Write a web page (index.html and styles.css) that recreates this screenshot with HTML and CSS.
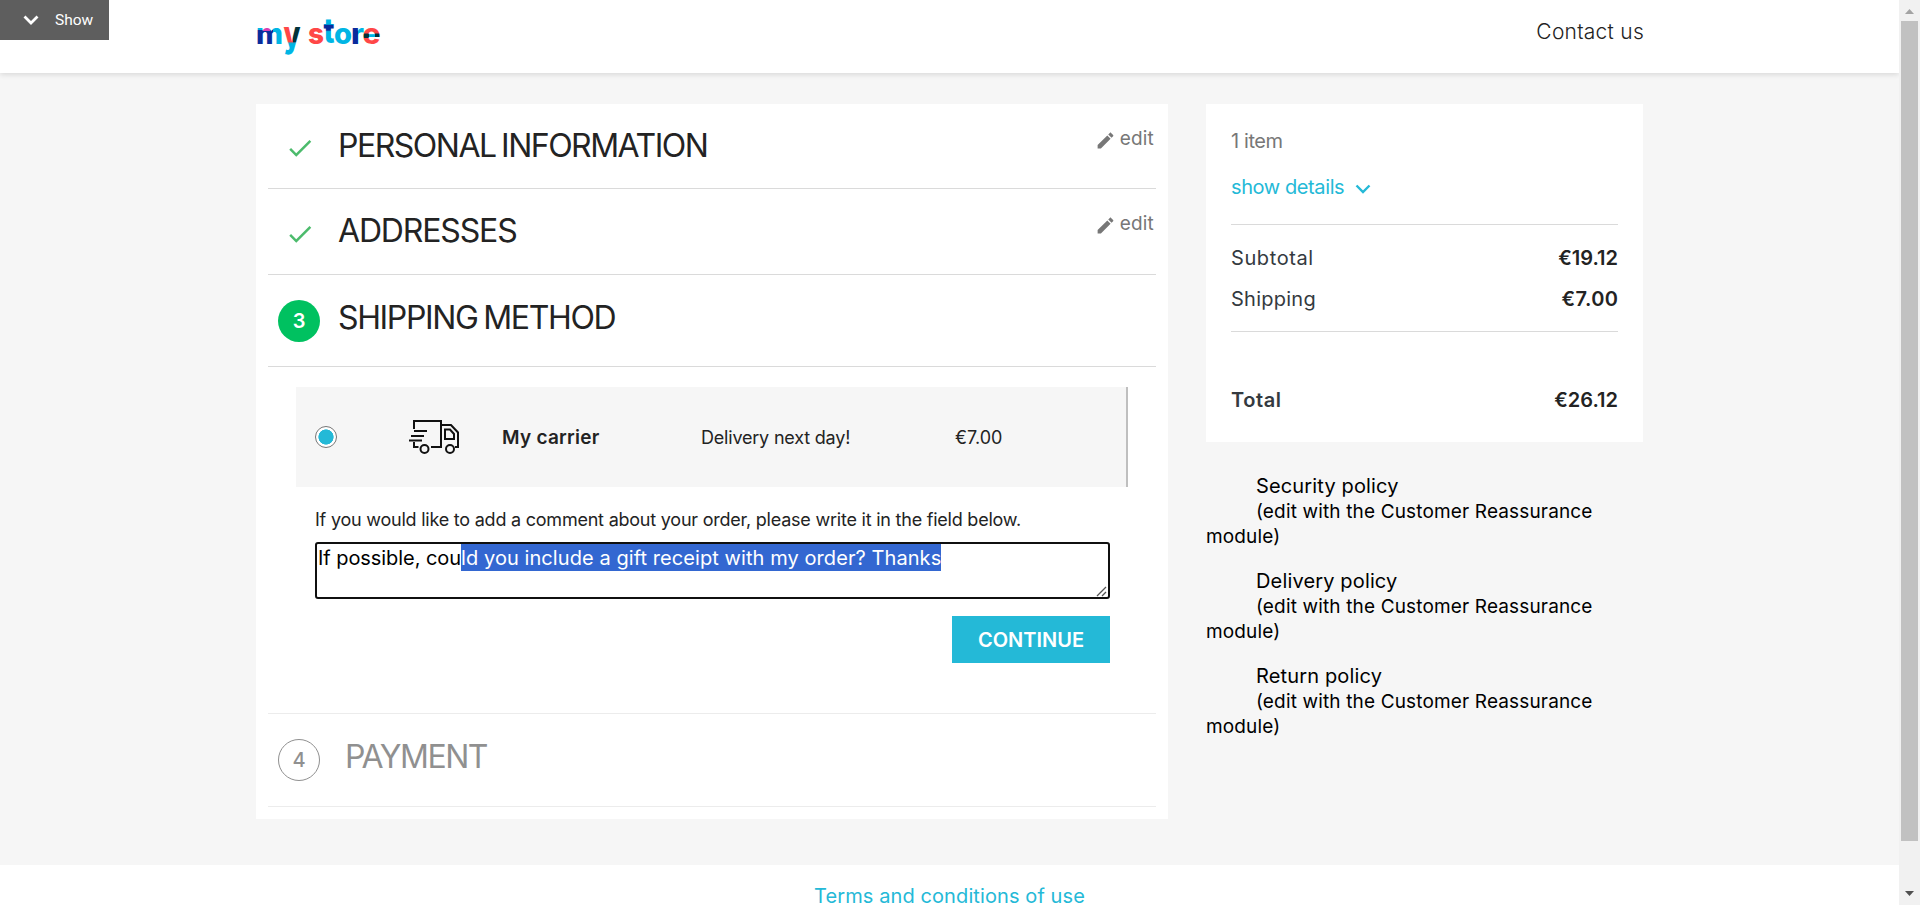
FILE: index.html
```html
<!DOCTYPE html>
<html lang="en">
<head>
<meta charset="utf-8">
<title>My store - Checkout</title>
<link rel="stylesheet" href="styles.css">
</head>
<body>
<div class="page">
  <header class="header">
    <div class="container header-row">
      <svg class="logo" width="126" height="44" viewBox="0 0 126 44" aria-label="my store">
        <defs>
          <pattern id="fill-m" patternUnits="userSpaceOnUse" width="126" height="44"><rect width="126" height="44" fill="#00b5e4"/><rect x="1" y="15" width="16" height="29" fill="#0a2b9c"/><rect x="7" y="8" width="7" height="8" fill="#d63fb4"/></pattern>
          <pattern id="fill-y" patternUnits="userSpaceOnUse" width="126" height="44"><rect width="126" height="44" fill="#ff4747"/><rect x="37" width="10" height="25" fill="#02323a"/><rect y="25" width="126" height="19" fill="#00b5e4"/></pattern>
          <pattern id="fill-t" patternUnits="userSpaceOnUse" width="126" height="44"><rect width="126" height="44" fill="#00b5e4"/><rect y="13" width="126" height="5" fill="#0a2b9c"/></pattern>
          <pattern id="fill-r" patternUnits="userSpaceOnUse" width="126" height="44"><rect width="126" height="44" fill="#0a2b9c"/><rect x="102" width="24" height="44" fill="#00b5e4"/></pattern>
          <pattern id="fill-e" patternUnits="userSpaceOnUse" width="126" height="44"><rect width="126" height="44" fill="#ff4747"/><rect x="106" y="18.500" width="20" height="4.500" fill="#02323a"/><rect x="113" y="18.500" width="6" height="4.500" fill="#00b5e4"/></pattern>
        </defs>
        <g class="logo-text">
          <text x="0" y="28.500" textLength="27" lengthAdjust="spacingAndGlyphs" fill="url(#fill-m)">m</text>
          <text transform="translate(0 -3.200) scale(1 1.230)" x="27.500" y="28.500" textLength="17" lengthAdjust="spacingAndGlyphs" fill="url(#fill-y)">y</text>
          <text x="52" y="28.500" textLength="16" lengthAdjust="spacingAndGlyphs" fill="#ff4747">s</text>
          <text transform="translate(0 -6) scale(1 1.210)" x="67.500" y="28.500" textLength="11" lengthAdjust="spacingAndGlyphs" fill="url(#fill-t)">t</text>
          <text x="78" y="28.500" textLength="18" lengthAdjust="spacingAndGlyphs" fill="#00b5e4">o</text>
          <text x="95" y="28.500" textLength="13" lengthAdjust="spacingAndGlyphs" fill="url(#fill-r)">r</text>
          <text x="106.500" y="28.500" textLength="18" lengthAdjust="spacingAndGlyphs" fill="url(#fill-e)">e</text>
        </g>
      </svg>
      <a class="contact">Contact us</a>
    </div>
    <div class="show-tab">
      <svg width="16" height="11" viewBox="0 0 16 11"><path d="M1.500 1.500 8 8l6.500-6.500" fill="none" stroke="#fff" stroke-width="2.800"/></svg>
      <span>Show</span>
    </div>
  </header>

  <main class="container content">
    <section class="checkout">
      <div class="step">
        <span class="marker"><svg class="check" width="30" height="30" viewBox="0 0 24 24"><path d="M9 16.170 4.830 12l-1.420 1.410L9 19 21 7l-1.410-1.410z"/></svg></span>
        <h1 class="title personal">PERSONAL INFORMATION</h1>
        <a class="edit"><svg width="21" height="21" viewBox="0 0 24 24"><path d="M3 17.250V21h3.750L17.810 9.940l-3.750-3.750zM20.710 7.040c.39-.39.39-1.020 0-1.410l-2.340-2.340c-.39-.39-1.020-.39-1.410 0l-1.830 1.830 3.750 3.750z"/></svg><span>edit</span></a>
      </div>
      <div class="step second">
        <span class="marker"><svg class="check" width="30" height="30" viewBox="0 0 24 24"><path d="M9 16.170 4.830 12l-1.420 1.410L9 19 21 7l-1.410-1.410z"/></svg></span>
        <h1 class="title addresses">ADDRESSES</h1>
        <a class="edit"><svg width="21" height="21" viewBox="0 0 24 24"><path d="M3 17.250V21h3.750L17.810 9.940l-3.750-3.750zM20.710 7.040c.39-.39.39-1.020 0-1.410l-2.340-2.340c-.39-.39-1.020-.39-1.410 0l-1.830 1.830 3.750 3.750z"/></svg><span>edit</span></a>
      </div>
      <div class="step current">
        <span class="marker badge">3</span>
        <h1 class="title shipping">SHIPPING METHOD</h1>
      </div>
      <div class="delivery">
        <div class="carrier">
          <span class="radio"></span>
          <svg class="truck" width="52" height="36" viewBox="0 0 52 36" fill="none" stroke="#111" stroke-width="2">
            <path d="M6 10V2h27v26H23M6 23v5h4.500M33 6h10l7 7.500V28h-3M1 21.500h13M3 17h13M6 12h13"/>
            <path d="M37 10.500h5l4 4.500v5h-9z"/><circle cx="16.500" cy="30" r="4"/><circle cx="42" cy="30" r="4"/>
          </svg>
          <span class="carrier-name">My carrier</span>
          <span class="carrier-delay">Delivery next day!</span>
          <span class="carrier-price">€7.00</span>
        </div>
        <div class="comment">
          <label class="comment-label">If you would like to add a comment about your order, please write it in the field below.</label>
          <div class="textarea"><span class="plain">If possible, cou</span><span class="selected">ld you include a gift receipt with my order? Thanks</span>
            <svg class="grip" width="11" height="11" viewBox="0 0 11 11"><path d="M1 10l9-9M6 10l4-4" stroke="#555" stroke-width="1.300"/></svg>
          </div>
          <button class="continue">CONTINUE</button>
        </div>
      </div>
      <div class="step payment">
        <span class="marker badge outline">4</span>
        <h1 class="title pay">PAYMENT</h1>
      </div>
    </section>

    <aside class="side">
      <div class="summary">
        <p class="count">1 item</p>
        <a class="details"><span>show details</span><svg width="16" height="10" viewBox="0 0 16 10"><path d="M1.500 1.500 8 8l6.500-6.500" fill="none" stroke="#24b9d7" stroke-width="2.400"/></svg></a>
        <div class="lines">
          <div class="line"><span class="subtotal">Subtotal</span><b>€19.12</b></div>
          <div class="line"><span class="ship-fee">Shipping</span><b class="fee">€7.00</b></div>
        </div>
        <div class="line total"><b class="total-label">Total</b><b>€26.12</b></div>
      </div>
      <div class="policies">
        <div class="policy"><p class="policy-name">Security policy</p><p class="policy-text">(edit with the Customer Reassurance module)</p></div>
        <div class="policy"><p class="policy-name">Delivery policy</p><p class="policy-text">(edit with the Customer Reassurance module)</p></div>
        <div class="policy"><p class="policy-name">Return policy</p><p class="policy-text">(edit with the Customer Reassurance module)</p></div>
      </div>
    </aside>
  </main>

  <footer class="footer"><a>Terms and conditions of use</a></footer>
</div>
<div class="scrollbar">
  <svg width="21" height="21" viewBox="0 0 21 21"><path d="M6 14l4.500-5 4.500 5z" fill="#a3a3a3"/></svg>
  <div class="thumb"></div>
  <svg class="down" width="21" height="21" viewBox="0 0 21 21"><path d="M6 7h9l-4.500 5z" fill="#505050"/></svg>
</div>
</body>
</html>
```
FILE: styles.css
```css
* { box-sizing: border-box; }
body {
  margin: 0;
  display: flex;
  height: 905px;
  overflow: hidden;
  background: #f6f6f6;
  color: #232323;
  font-family: Inter, "Liberation Sans", sans-serif;
  font-size: 20px;
}
h1, p { margin: 0; font-weight: inherit; }
.page { flex: 1; height: 905px; overflow: hidden; }
.container { width: 1387px; margin: 0 auto; }

.header { position: relative; height: 73px; background: #fff; box-shadow: 0 2px 5px rgba(0, 0, 0, .11); }
.header-row { display: flex; justify-content: space-between; padding-top: 15px; }
.logo-text { font-family: Inter, sans-serif; font-weight: 800; font-size: 29px; }
.contact { margin: 5px -1px 0 0; line-height: 23px; font-size: 21px; font-weight: 300; letter-spacing: .25px; }
.show-tab {
  position: absolute; left: 0; top: 0; width: 109px; height: 40px;
  display: flex; align-items: center; gap: 16px; padding-left: 23px;
  background: #5e5e5e; color: #fff; font: 15.500px Roboto, sans-serif;
}

.content { display: flex; justify-content: space-between; align-items: flex-start; padding-top: 31px; height: 792px; }
.checkout { width: 912px; height: 715px; padding: 0 12px; background: #fff; }
.step { display: flex; align-items: flex-start; height: 85px; padding-left: 10px; border-bottom: 1px solid #dadada; }
.second { height: 86px; }
.current { height: 92px; }
.payment { height: 94px; border-top: 1px solid #dadada; opacity: .5; }
.marker { width: 42px; flex: none; margin-right: 18px; }
.check { display: block; margin: 29px 0 0 7px; fill: #4cbb6c; }
.second .check { margin-top: 30px; }
.badge {
  height: 42px; margin-top: 25px; border-radius: 50%; background: #00c160; color: #fff;
  font-weight: 600; line-height: 42px; text-align: center;
}
.outline { border: 1px solid #232323; background: none; color: #232323; font-weight: 500; line-height: 40px; }
.title { flex: 1; margin-top: 21px; line-height: 41px; font-size: 32px; letter-spacing: -1.500px; word-spacing: -2px; }
.addresses { letter-spacing: -1.150px; }
.shipping { margin-top: 22px; letter-spacing: -1.350px; }
.pay { margin: 22px 0 0 7px; letter-spacing: -1.500px; }
.edit { display: flex; gap: 4px; padding: 22px 2px 0 0; color: #777; font-size: 19px; line-height: 26px; letter-spacing: .2px; }
.edit svg { margin-top: 4px; fill: #777; }

.delivery { padding: 20px 28px 50px; }
.carrier {
  display: flex; align-items: center; height: 100px; padding-left: 19px;
  background: #f6f6f6; border-right: 2px solid #bfbfbf; font-size: 18px;
}
.radio { width: 22px; height: 22px; border: 1px solid #777; border-radius: 50%; background: radial-gradient(circle, #24b9d7 7.3px, #fff 7.9px); }
.truck { margin-left: 71px; }
.carrier-name { width: 199px; margin-left: 42px; font-size: 19px; font-weight: 600; letter-spacing: .25px; }
.carrier-delay { width: 254px; letter-spacing: -.2px; }
.comment { padding: 20px 18px 0 19px; }
.comment-label { display: block; height: 35px; line-height: 25px; font-size: 18px; letter-spacing: -.225px; white-space: nowrap; }
.textarea { position: relative; height: 57px; padding-left: 1px; border: 2px solid #101010; border-radius: 3px; color: #000; line-height: 27px; white-space: nowrap; }
.textarea span { display: inline-block; height: 27px; line-height: 28px; vertical-align: top; }
.plain { letter-spacing: -.060px; }
.selected { background: #3367d1; color: #fff; letter-spacing: .075px; }
.grip { position: absolute; right: 1px; bottom: 0; }
.continue { display: block; width: 158px; height: 47px; margin: 17px 0 0 auto; padding: 0; border: 0; background: #24b9d7; color: #fff; font: 600 20px Inter, sans-serif; }

.side { width: 437px; }
.summary { height: 338px; padding: 25px 25px 0; background: #fff; }
.count { line-height: 24px; color: #777; letter-spacing: -.4px; }
.details { display: flex; align-items: center; gap: 11px; height: 71px; padding-bottom: 3px; color: #24b9d7; letter-spacing: -.4px; }
.details svg { margin-top: 4px; }
.lines { height: 108px; padding-top: 13px; border: 1px solid #dadada; border-width: 1px 0; }
.line { display: flex; justify-content: space-between; line-height: 41px; color: #343a40; }
.line b { font-weight: 600; }
.line b:last-child { color: #232323; }
.subtotal { letter-spacing: .6px; }
.ship-fee { letter-spacing: .25px; }
.line .fee { letter-spacing: .4px; margin-right: -.4px; }
.line .total-label { letter-spacing: .6px; }
.total { margin-top: 48px; }
.policies { padding-top: 32px; color: #000; }
.policy { height: 95px; font-size: 19px; line-height: 25px; }
.policy p { text-indent: 50px; }
.policy .policy-name { font-size: 20px; letter-spacing: .15px; }
.policy-text { letter-spacing: .15px; }
.footer { height: 40px; padding-top: 23px; background: #fff; text-align: center; line-height: 17px; letter-spacing: .1px; color: #24b9d7; }

.scrollbar { width: 21px; height: 905px; display: flex; flex-direction: column; background: #f1f1f1; }
.thumb { width: 17px; height: 820px; margin-left: 2px; background: #c1c1c1; }
.down { margin-top: auto; }
```
